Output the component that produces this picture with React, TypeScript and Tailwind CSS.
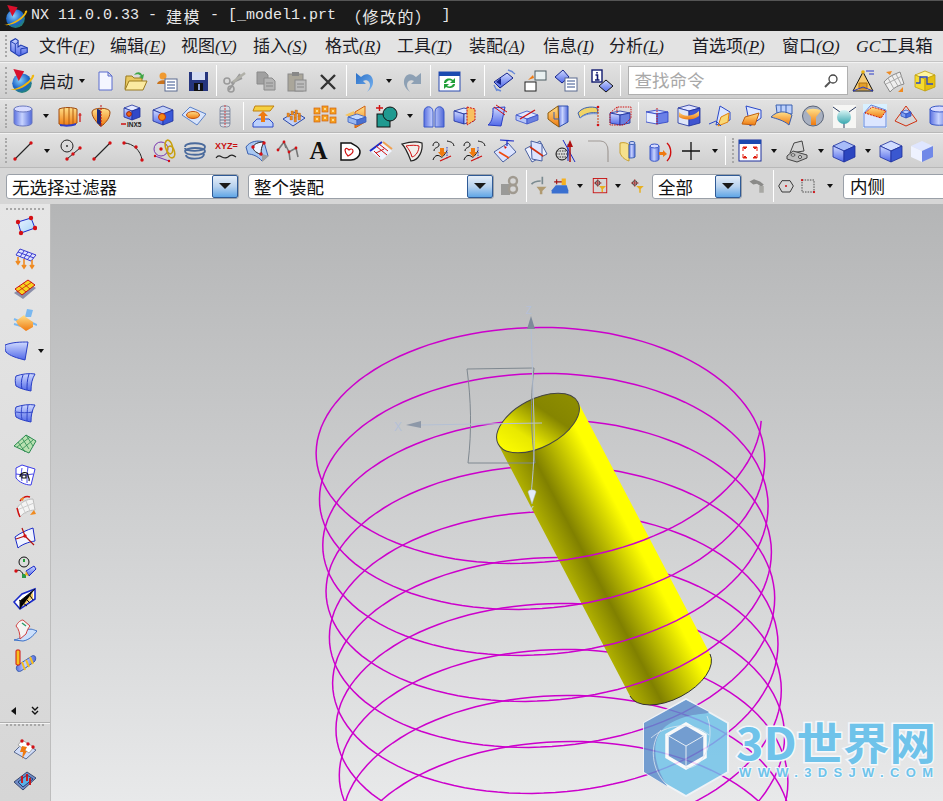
import type { ReactNode } from 'react'

const cjk = "font-['Noto_Sans_CJK_SC',sans-serif]"

function Iso({ cx = 12, y = 3, w = 9, d = 4, h = 11, t = '#e3e8ff', l = 'url(#gB)', r = '#3048c8', s = '#1c2f9c' }) {
  return (
    <g stroke={s} strokeWidth="0.8" strokeLinejoin="round">
      <path d={`M${cx} ${y}L${cx + w} ${y + d}L${cx} ${y + 2 * d}L${cx - w} ${y + d}Z`} fill={t} />
      <path d={`M${cx - w} ${y + d}L${cx} ${y + 2 * d}V${y + 2 * d + h}L${cx - w} ${y + d + h}Z`} fill={l} />
      <path d={`M${cx + w} ${y + d}L${cx} ${y + 2 * d}V${y + 2 * d + h}L${cx + w} ${y + d + h}Z`} fill={r} />
    </g>
  )
}

const Dot = ({ x, y, r = 1.7 }: { x: number; y: number; r?: number }) => <circle cx={x} cy={y} r={r} fill="#d40f14" />

const Sheet = ({ fill = 'url(#gB)', stroke = '#2a3fc4' }) => (
  <path d="M3 6C9 4 16 3 22 4C19 9 18 14 18 21C13 20 8 19 3 16C2 12 2 9 3 6Z" fill={fill} stroke={stroke} />
)

const Grid = ({ stroke = '#2a3fc4' }) => (
  <path d="M9 5C8 10 8 15 9 18M15 4C14 10 14 15 14 20M3 11C9 12 14 12 20 11" fill="none" stroke={stroke} strokeWidth="0.9" />
)

const Wave = () => <path d="M2 19C6 13 9 22 14 18C17 15 19 16 22 18" fill="none" stroke="#222" strokeWidth="1.1" />

const icons: Record<string, ReactNode> = {
  logo: (
    <>
      <circle cx="12" cy="14" r="9" fill="url(#gGlobe)" />
      <path d="M1 20C8 22 20 15 23 8C24 6 22 6 21 7C22 10 10 20 1 20Z" fill="#f2b70c" />
      <path d="M4 1L14 3L9 12Z" fill="#d8102c" />
    </>
  ),
  page: <path d="M6 3H15L19 7V21H6Z M15 3V7H19" fill="#f4f6ff" stroke="#5b6ccf" />,
  open: (
    <>
      <path d="M1 20L2 7H8L10 9H18V20Z" fill="#e8c860" stroke="#9a7a20" />
      <path d="M1 21L5 12H23L19 21Z" fill="#fbeaa0" stroke="#9a7a20" />
      <path d="M10 6C13 2 17 3 18 6L20 5L19 10L15 8L17 7C15 5 13 5 10 6Z" fill="#3ea545" />
    </>
  ),
  user: (
    <>
      <circle cx="8" cy="7" r="3.5" fill="#f09a30" />
      <path d="M2 15C3 10 13 10 13 15Z" fill="#c9731c" />
      <rect x="10" y="10" width="12" height="12" fill="#fff" stroke="#5a6a90" />
      <path d="M12 13H20M12 16H20M12 19H20" stroke="#34508c" />
    </>
  ),
  save: (
    <>
      <path d="M3 3H22V22H3Z" fill="#25357e" />
      <rect x="6" y="3" width="13" height="8" fill="#d4dcf2" />
      <rect x="8" y="14" width="9" height="8" fill="#111" />
      <rect x="12" y="15" width="2" height="6" fill="#8fa2d4" />
    </>
  ),
  cut: (
    <>
      <path d="M6 21L17 5M19 9L8 14" stroke="#9a9a9a" strokeWidth="2" />
      <path d="M10 13L22 4" stroke="#b0b0a8" strokeWidth="2.5" />
      <circle cx="4" cy="12" r="3" fill="none" stroke="#9a9a9a" strokeWidth="1.6" />
      <circle cx="8" cy="20" r="3" fill="none" stroke="#9a9a9a" strokeWidth="1.6" />
    </>
  ),
  copy: (
    <>
      <path d="M3 3H11L14 6V15H3Z" fill="#a0a0a0" stroke="#8a8a8a" />
      <path d="M10 9H18L21 12V21H10Z" fill="#b4b4b4" stroke="#8a8a8a" />
      <path d="M12 14H19M12 17H19" stroke="#888" />
    </>
  ),
  paste: (
    <>
      <rect x="3" y="5" width="15" height="17" fill="#aaa69a" stroke="#8a8a8a" />
      <rect x="7" y="3" width="7" height="4" fill="#888" />
      <rect x="10" y="11" width="11" height="11" fill="#bdbdbd" stroke="#8a8a8a" />
      <path d="M12 15H19M12 18H19" stroke="#888" />
    </>
  ),
  del: <path d="M5 6L19 20M19 6L5 20" stroke="#333" strokeWidth="2.4" />,
  undo: <path d="M3 4V15H13L10 12C13 10 17 12 17 16C17 18 16 21 14 23C20 19 22 12 18 7C15 4 11 5 8 8L3 4Z" fill="url(#gU)" />,
  redo: <path d="M21 4V15H11L14 12C11 10 7 12 7 16C7 18 8 21 10 23C4 19 2 12 6 7C9 4 13 5 16 8L21 4Z" fill="#8da0b4" />,
  refresh: (
    <>
      <rect x="2" y="3" width="21" height="19" fill="#fff" stroke="#2a4ab0" />
      <rect x="2" y="3" width="21" height="4" fill="#1a4ab0" />
      <path d="M7 14C7 10 12 8 16 11L18 9V14H13L15 12C12 10 10 12 9 14ZM18 15C18 19 12 20 9 18L7 20V15H12L10 17C13 18 15 17 16 15Z" fill="#22a03a" />
    </>
  ),
  orient: (
    <>
      <path d="M2 13L15 4L21 9L8 19Z" fill="url(#gB)" stroke="#15248c" />
      <path d="M5 22L2 16M21 3L16 1M23 5L19 2M9 22L4 20" stroke="#6a8ad8" strokeWidth="1.4" />
      <path d="M4 13L9 9V16Z" fill="#15248c" />
    </>
  ),
  windows: (
    <>
      <rect x="2" y="13" width="11" height="9" fill="#fff" stroke="#222" />
      <rect x="12" y="2" width="11" height="9" fill="#e8f0f0" stroke="#4a5a60" />
      <path d="M5 11L10 6L11 9L8 10Z" fill="#ef7a10" />
    </>
  ),
  difflist: (
    <>
      <path d="M1 8L9 1L15 8L8 14Z" fill="url(#gB)" stroke="#15248c" />
      <rect x="11" y="9" width="12" height="13" fill="#fff" stroke="#5a6a90" />
      <path d="M13 12H21M13 15H21M13 18H21" stroke="#34508c" />
    </>
  ),
  info: (
    <>
      <rect x="2" y="1" width="10" height="12" fill="#fff" stroke="#111a70" strokeWidth="1.4" />
      <path d="M7 3V4.6M5.5 6H7.5V11M5 11H9.5" stroke="#111a70" strokeWidth="1.6" fill="none" />
      <path d="M9 17L16 11L23 17L16 23Z" fill="url(#gB)" stroke="#111" />
    </>
  ),
  pyramid: (
    <>
      <path d="M12 3L2 22H22Z" fill="#f5c970" stroke="#111" />
      <path d="M8 14H16V20H8Z" fill="#e3a02a" stroke="#b07010" />
      <path d="M2 22L12 18L22 22" fill="none" stroke="#2a3ac8" />
      <circle cx="12" cy="3" r="1.8" fill="#e8b010" />
      <path d="M15 2H23M18 5H23" stroke="#2a3ac8" />
    </>
  ),
  mesh: (
    <>
      <path d="M2 13C7 7 13 5 18 3L22 15C17 16 11 19 8 23Z" fill="#eee" stroke="#888" />
      <path d="M6 9L12 20M10 7L16 17M14 5L19 15M4 15L20 7" stroke="#aaa" />
      <path d="M4 3L10 2L8 6ZM16 23L21 18L21 23Z" fill="#ef8a20" />
    </>
  ),
  yellowcube: (
    <>
      <Iso cx={12} y={2} w={10} d={4} h={12} t="#fff6a0" l="#f5dc30" r="#e5c010" s="#c0a010" />
      <path d="M3 14H7V8H14V15H20" fill="none" stroke="#2a48c8" strokeWidth="1.3" />
    </>
  ),
  cyl: (
    <>
      <path d="M3 5V19C3 23 21 23 21 19V5Z" fill="url(#gBh)" stroke="#6a78c0" />
      <ellipse cx="12" cy="5" rx="9" ry="3" fill="#d8dcff" stroke="#6a78c0" />
    </>
  ),
  extrude: (
    <>
      <path d="M1 5C6 3 14 3 19 5V19C14 22 6 22 1 20Z" fill="url(#gO)" stroke="#a04a10" />
      <path d="M6 4V21M11 4V21M15 4V21" stroke="#b05a10" />
      <path d="M2 20C6 21 14 21 18 19V21C14 23 6 23 2 22Z" fill="#3040c8" />
      <path d="M22 9V18M20.5 11H23.5" stroke="#d01010" strokeWidth="1.2" />
    </>
  ),
  revolve: (
    <>
      <path d="M3 8C3 3 21 3 21 8C21 14 17 18 14 21L11 22C8 18 3 14 3 8Z" fill="url(#gO)" stroke="#a04a10" />
      <path d="M8 5V19L12 22V8C12 6 10 5 8 5Z" fill="#1c2a80" />
      <path d="M12 1V23" stroke="#c01010" strokeDasharray="2 1" />
    </>
  ),
  hole: (
    <>
      <Iso cx={12} y={1} w={8} d={3} h={9} />
      <circle cx="9" cy="10" r="2.4" fill="#ef6a10" stroke="#a02010" />
      <path d="M1 20H6" stroke="#d01010" strokeWidth="1.5" />
      <text x="7" y="23" fontSize="6.5" fontWeight="700" fontFamily="Liberation Sans" fill="#222">INX5</text>
    </>
  ),
  boss: (
    <>
      <Iso cx={12} y={2} w={10} d={4} h={11} t="#c5d2f8" l="url(#gB)" r="#3a58d8" />
      <circle cx="11" cy="13" r="3.5" fill="#f58a10" stroke="#c03010" />
    </>
  ),
  pad: (
    <>
      <path d="M0 11L8 3L24 10L15 21Z" fill="#d8e4fa" stroke="#5a80c8" />
      <ellipse cx="11" cy="11" rx="6.500" ry="3.500" fill="url(#gO)" stroke="#c05010" />
    </>
  ),
  thread: (
    <>
      <rect x="7" y="2" width="10" height="21" rx="3" fill="#d8dce4" stroke="#8a93a8" />
      <path d="M7 7H17M7 10H17M7 13H17M7 16H17M7 19H17" stroke="#70788c" />
      <path d="M12 1V23" stroke="#d04040" strokeDasharray="2 1" />
    </>
  ),
  raise: (
    <>
      <path d="M4 2H23L19 7H2Z" fill="#f5d040" stroke="#c08010" />
      <path d="M2 19L6 15H18L22 19V23H2Z" fill="#bcd0fb" stroke="#2a48c8" />
      <path d="M10 18V12H7L12 7L17 12H14V18Z" fill="#ef7a10" />
    </>
  ),
  bumps: (
    <>
      <path d="M1 15L13 8L23 14L11 22Z" fill="#c5d3f8" stroke="#2a48a8" />
      {[[6, 12], [10, 10], [14, 9], [9, 15], [13, 13], [17, 12], [13, 17], [17, 15]].map(([x, y]) => (
        <rect key={`${x}-${y}`} x={x - 1} y={y - 3} width="2.500" height="4" fill="#e98a20" stroke="#b05a10" strokeWidth="0.3" />
      ))}
    </>
  ),
  cubes: (
    <>
      {[[4, 7], [12, 5], [20, 7], [4, 15], [12, 14], [20, 16]].map(([x, y]) => (
        <g key={`${x}-${y}`}>
          <rect x={x - 3} y={y - 3} width="6" height="6" fill="#f5a020" stroke="#d06010" strokeWidth="0.7" />
          <rect x={x - 1} y={y - 1} width="2" height="2" fill="#ffd890" />
        </g>
      ))}
    </>
  ),
  plane: (
    <>
      <path d="M11 8L21 2V18L11 24Z" fill="url(#gO)" stroke="#d06010" />
      <path d="M1 11L10 7V15Z" fill="#f5c460" />
      <Iso cx={13} y={10} w={9} d={3} h={5} t="#c0d8ff" l="#9ab8f0" r="#4a70d0" s="#3a60c0" />
    </>
  ),
  csg: (
    <>
      <rect x="2" y="10" width="13" height="13" fill="#1f9a90" stroke="#111" />
      <circle cx="15" cy="10" r="7" fill="#1f9a90" stroke="#111" />
      <path d="M1 4H8M4.500 1V7" stroke="#d01010" strokeWidth="1.4" />
    </>
  ),
  twin: (
    <>
      <path d="M2 23V8C2 1 11 1 11 8V23ZM13 23V8C13 1 22 1 22 8V23Z" fill="url(#gBh)" stroke="#3a58c8" />
    </>
  ),
  redbox: (
    <>
      <Iso cx={11} y={4} w={10} d={3} h={10} t="#dfe6ff" l="url(#gB)" r="#bcd0fb" />
      <path d="M14 3L22 5V16L14 21Z" fill="#f8c060" stroke="#d01010" strokeDasharray="2 1" />
    </>
  ),
  sweep: (
    <>
      <path d="M9 4L21 3L17 22L4 21C9 17 9 10 9 4Z" fill="url(#gB)" stroke="#2a3fc4" />
      <path d="M12 1L23 8M10 3L21 11" stroke="#d01010" />
    </>
  ),
  slab: (
    <>
      <Iso cx={12} y={7} w={11} d={4} h={5} t="#e0e8ff" l="#b8c8f8" r="#6a80e0" s="#3a50c8" />
      <path d="M5 15L20 6" stroke="#d01010" strokeWidth="1.4" />
    </>
  ),
  chamfer: (
    <>
      <path d="M12 2H22V18L13 23Z" fill="url(#gBh)" stroke="#3050b0" />
      <path d="M2 9L12 2L13 23L7 19L2 15Z" fill="url(#gO)" stroke="#8a5a10" />
      <path d="M8 8V15H13" stroke="#3a60b0" fill="none" />
    </>
  ),
  band: (
    <>
      <path d="M1 9C5 3 15 2 20 4L21 9C15 8 8 9 3 14Z" fill="#f0d468" stroke="#3a60b0" />
      <path d="M3 14C8 10 15 9 21 10" stroke="#6a90d8" fill="none" />
      <path d="M21 2V21" stroke="#d04010" strokeDasharray="2 1" />
      <Dot x={21} y={3} r={1.3} />
      <Dot x={21} y={21} r={1.3} />
    </>
  ),
  redcage: (
    <>
      <Iso cx={12} y={7} w={10} d={2} h={10} t="#dfe6ff" l="url(#gB)" r="#6a80e0" />
      <path d="M2 9L9 3H23V14L16 21H2Z M9 3V9" fill="none" stroke="#d01010" strokeDasharray="1.5 1" />
    </>
  ),
  cutbox: (
    <>
      <Iso cx={11} y={6} w={11} d={2} h={10} t="#cfdcff" l="#e8efff" r="#6a80e8" s="#2a3fc4" />
      <path d="M11 4V21" stroke="#d01010" strokeDasharray="1.5 1" />
    </>
  ),
  topband: (
    <>
      <Iso cx={12} y={1} w={11} d={3} h={15} t="#e0e4ff" l="#dfe6f8" r="#4055d0" s="#1c2f9c" />
      <path d="M2 8C6 13 16 13 22 7V12C16 17 6 16 2 13Z" fill="url(#gO)" />
    </>
  ),
  fold: (
    <>
      <path d="M12 2L22 8V16L8 21Z" fill="#dce6ff" stroke="#2a48c8" />
      <path d="M10 22L20 18L21 9L13 13Z" fill="#f8d878" stroke="#e08010" />
      <path d="M1 20L8 17L13 22" fill="none" stroke="#2a48c8" />
    </>
  ),
  fold2: (
    <>
      <path d="M7 2L22 6V14L11 22Z" fill="#dce6ff" stroke="#2a48c8" />
      <path d="M6 13L20 9L16 21L3 20Z" fill="url(#gO)" stroke="#c06010" />
    </>
  ),
  fold3: (
    <>
      <path d="M6 1H22V10L7 9Z" fill="#bcd0fb" stroke="#3a60b0" />
      <path d="M11 1V9M16 1V9" stroke="#3a60b0" />
      <path d="M1 13C8 6 16 7 22 11L19 21C13 16 7 15 1 13Z" fill="url(#gO)" stroke="#3a60b0" />
    </>
  ),
  funnel: (
    <>
      <ellipse cx="12" cy="12" rx="10.500" ry="10" fill="#a8b0c0" stroke="#5a6478" />
      <path d="M5 7C7 4 17 4 20 7L15 13V21H10V13Z" fill="url(#gO)" />
    </>
  ),
  node: (
    <>
      <rect x="1" y="1" width="23" height="23" fill="#f6f6f4" />
      <path d="M1 3L8 8M24 3L17 8M12 24V19" stroke="#2a3a60" />
      <circle cx="12" cy="13" r="7" fill="url(#gTeal)" />
    </>
  ),
  slope: (
    <>
      <path d="M0 0H24V24H0Z" fill="#d8f0ff" />
      <path d="M1 9L8 1L23 6V23H1Z" fill="#dce6ff" stroke="#6a88d8" />
      <path d="M2 9L9 3L23 7L18 14Z" fill="url(#gO)" stroke="#d02010" strokeDasharray="2 1" />
    </>
  ),
  frustum: (
    <>
      <path d="M12 2L23 17L12 22L1 17Z" fill="none" stroke="#d03010" />
      <Iso cx={12} y={6} w={5} d={2} h={4} t="#c0d0ff" l="#80a0f0" r="#4a70e0" s="#3050c0" />
    </>
  ),
  cylb: (
    <>
      <path d="M5 5V19C5 22 24 22 24 19V5Z" fill="url(#gBh)" stroke="#3a58c8" />
      <ellipse cx="14.500" cy="5" rx="9.500" ry="3" fill="#d8dcff" stroke="#3a58c8" />
    </>
  ),
  line: (
    <>
      <path d="M4 20L20 4" stroke="#222" strokeWidth="1.1" />
      <Dot x={4} y={20} />
      <Dot x={20} y={4} />
    </>
  ),
  circline: (
    <>
      <circle cx="8" cy="7" r="6" fill="none" stroke="#222" />
      <circle cx="8" cy="7" r="0.9" fill="#222" />
      <path d="M8 20L21 9" stroke="#222" />
      <Dot x={8} y={20} />
      <Dot x={14} y={15} />
      <Dot x={21} y={9} />
    </>
  ),
  arc: (
    <>
      <path d="M3 4C12 4 20 12 21 21" fill="none" stroke="#222" />
      <Dot x={3} y={4} />
      <Dot x={15} y={8} />
      <Dot x={21} y={21} />
    </>
  ),
  chain: (
    <>
      <circle cx="9" cy="10" r="7" fill="none" stroke="#7a38b0" />
      <Dot x={9} y={10} />
      <ellipse cx="17" cy="8" rx="3.500" ry="7" fill="none" stroke="#c8a010" strokeWidth="1.6" transform="rotate(-15 17 8)" />
      <ellipse cx="19" cy="13" rx="3.500" ry="6" fill="none" stroke="#c8a010" strokeWidth="1.6" transform="rotate(-15 19 13)" />
      <path d="M3 17L17 22" stroke="#7a38b0" />
      <Dot x={3} y={17} r={1.2} />
      <Dot x={17} y={22} r={1.2} />
    </>
  ),
  spring: <path d="M2 8C2 3 22 3 22 8C22 13 2 13 2 9M2 12C2 17 22 17 22 12C22 8 2 8 2 12M3 16C3 21 21 21 21 15" fill="none" stroke="#4a6a9c" strokeWidth="1.8" />,
  xyz: (
    <>
      <text x="1" y="10" fontSize="9" fontWeight="700" fontFamily="Liberation Sans" fill="#c81010">XYZ=</text>
      <Wave />
    </>
  ),
  surf: (
    <>
      <path d="M1 8C5 2 13 1 19 3L23 17L17 22C13 17 7 15 3 15Z" fill="#a9c8f2" stroke="#3a60b0" />
      <path d="M8 8C9 5 13 3 19 3C17 7 15 12 17 16C12 14 8 12 8 8Z" fill="#f0f4ff" stroke="#222" />
      <path d="M17 15L24 17L17 23Z" fill="#a0a0a0" />
      <Dot x={8} y={8} />
      <Dot x={19} y={4} />
      <Dot x={16} y={15} />
    </>
  ),
  poly: (
    <>
      <path d="M2 11L8 3L13 13L20 9L22 18M8 3L10 9M13 13L14 21" stroke="#777" strokeWidth="1.6" fill="none" />
      <Dot x={8} y={3} r={1.4} />
      <Dot x={13} y={13} r={1.4} />
      <Dot x={2} y={11} r={1.4} />
      <Dot x={20} y={9} r={1.4} />
    </>
  ),
  heart: (
    <>
      <path d="M3 4H13C15 6 22 7 22 13C22 18 17 21 13 21H3Z" fill="#fff" stroke="#111" strokeWidth="1.5" />
      <path d="M7 11C8 8 10 10 11 11C12 10 15 9 15 12C15 14 12 16 10 17C8 15 7 13 7 11Z" fill="none" stroke="#d01010" strokeWidth="1.2" />
    </>
  ),
  patch: (
    <>
      <path d="M1 12L13 3L23 12L13 21Z" fill="#eef4ff" />
      <path d="M1 12L13 3" stroke="#1a2ac8" strokeWidth="2" />
      <path d="M7 7L18 16M5 12L11 18M10 5L19 12M7 14L15 10" stroke="#d01010" />
      <path d="M14 3L23 10" stroke="#f0a050" strokeWidth="2" />
    </>
  ),
  dshape: (
    <>
      <path d="M2 5C9 3 17 2 22 4C23 12 19 21 11 22C9 17 6 9 2 5Z" fill="#f2eeea" stroke="#222" strokeWidth="1.2" />
      <path d="M6 7C11 6 16 6 19 7C19 12 16 17 12 18C11 14 9 10 6 7Z" fill="none" stroke="#d01010" />
    </>
  ),
  curves: (
    <>
      <path d="M2 7C2 2 8 2 8 6C8 9 3 8 3 12M16 2C20 3 22 3 23 7M2 21C4 15 8 16 10 18C12 19 14 14 16 12" fill="none" stroke="#111" />
      <path d="M16 8V20" stroke="#2a3ac8" strokeDasharray="1.5 1" />
      <path d="M9 9V13H7L11 18L15 13H13V9Z" fill="#ef7a10" />
      <path d="M9 22L20 17" stroke="#d01010" strokeWidth="1.3" />
    </>
  ),
  diamond: (
    <>
      <path d="M1 13L15 4L23 13L10 23Z" fill="#dce4ff" stroke="#4a60a0" />
      <path d="M7 1L21 2M14 2V7" stroke="#1a2ac8" strokeWidth="1.2" />
      <path d="M11 7L14 8L12 10Z" fill="#d01010" />
      <path d="M6 13L16 19" stroke="#ef4a10" strokeWidth="1.6" />
    </>
  ),
  diamond2: (
    <>
      <path d="M1 10L16 2L23 15L8 23Z" fill="#eef2ff" stroke="#4a60a0" />
      <path d="M7 2L18 5V22L8 20Z" fill="#dce4ff" stroke="#4a60a0" />
      <path d="M6 8L19 17" stroke="#d03010" strokeWidth="1.6" />
    </>
  ),
  sectn: (
    <>
      <circle cx="7" cy="15" r="6" fill="none" stroke="#111" />
      <path d="M1 15H13M2 12H12M2 18H12" stroke="#333" strokeDasharray="1.5 1" />
      <path d="M8 1L20 23" stroke="#1a2ac8" />
      <path d="M13 5L13 22" stroke="#1a2ac8" />
      <path d="M15 23V6" stroke="#b01010" strokeWidth="1.5" />
      <path d="M12 8L15 1L18 8Z" fill="#b01010" />
    </>
  ),
  fillet: <path d="M2 2H14C19 2 22 6 22 12V23" fill="none" stroke="#a09a96" strokeWidth="1.2" />,
  tube: (
    <>
      <path d="M3 4C7 3 11 4 12 6V22C9 21 5 19 3 14Z" fill="#f5e08c" stroke="#c8a030" />
      <path d="M12 6V19C14 19 17 19 18 18V5C16 4 13 4 12 6Z" fill="url(#gBh)" stroke="#3a60b0" />
      <ellipse cx="15" cy="4" rx="3" ry="1.500" fill="#d8dcff" stroke="#3a60b0" />
    </>
  ),
  cylarrow: (
    <>
      <path d="M2 7V20C2 23 11 23 11 20V7Z" fill="url(#gBh)" stroke="#3a58c8" />
      <ellipse cx="6.500" cy="7" rx="4.500" ry="2" fill="#d8dcff" stroke="#3a58c8" />
      <path d="M11 13H15V11L19 15L15 18V16H11Z" fill="#ef7a10" />
      <path d="M19 4C24 9 24 17 19 22" fill="none" stroke="#d01010" strokeWidth="1.4" />
    </>
  ),
  plus: <path d="M12 3V21M3 12H21" stroke="#111" strokeWidth="1.3" />,
  fit: (
    <>
      <rect x="1" y="1" width="22" height="21" fill="#fff" stroke="#1c2f9c" />
      <rect x="1" y="1" width="22" height="4" fill="#1a4ab0" />
      <path d="M5 8H9L7 10ZM19 8H15L17 10ZM5 19H9L7 17ZM19 19H15L17 17ZM5 8V12M19 8V12M5 19V15M19 19V15" stroke="#e02010" fill="#e02010" />
    </>
  ),
  camera: (
    <>
      <path d="M5 14L9 4L17 2L19 12Z" fill="#d4d4d4" stroke="#444" />
      <path d="M2 17L8 12L22 16V19L12 23L2 20Z" fill="#bdbdbd" stroke="#444" />
      <ellipse cx="8" cy="16" rx="2" ry="1.200" fill="#fff" stroke="#444" />
      <circle cx="15" cy="18" r="1.500" fill="#fff" stroke="#444" />
    </>
  ),
  cube: <Iso cx={12} y={2} w={11} d={5} h={11} t="#a8bcf8" l="url(#gB)" r="#2c46c0" />,
  cube2: <Iso cx={12} y={2} w={11} d={5} h={11} t="#d0dcff" l="url(#gB)" r="#3a58d0" />,
  cube3: <Iso cx={12} y={2} w={11} d={5} h={11} t="#dfe6ff" l="#eef2ff" r="#7088e8" s="transparent" />,
  bw1: (
    <>
      <path d="M3 10C6 6 11 6 14 6M16 1V10" stroke="#7a8a90" strokeWidth="2" fill="none" />
      <path d="M9 13H21L16 18V22H13V18Z" fill="#b09a70" />
    </>
  ),
  bw2: (
    <>
      <path d="M5 7H11M8 4V10M11 7H17" stroke="#a01010" strokeWidth="1.3" />
      <rect x="14" y="3" width="5" height="8" fill="#f5b020" />
      <path d="M2 17L7 11H20L22 17V21H2Z" fill="#3a70d0" />
    </>
  ),
  bw3: (
    <>
      <rect x="3" y="2" width="18" height="19" fill="none" stroke="#c81010" strokeWidth="1.2" />
      <circle cx="9" cy="8" r="3" fill="none" stroke="#111" />
      <path d="M4 8H14M9 3V13" stroke="#a01010" />
      <path d="M11 12H20L16 16V20H14V16Z" fill="#e8b020" />
    </>
  ),
  bw4: (
    <>
      <circle cx="9" cy="8" r="3" fill="none" stroke="#111" />
      <path d="M4 8H14M9 3V13" stroke="#a01010" />
      <path d="M11 12H21L17 16V21H15V16Z" fill="#e8b020" />
    </>
  ),
  chains: (
    <>
      <path d="M3 10H12V21H3Z" fill="#9a9a98" />
      <circle cx="15" cy="7" r="4" fill="none" stroke="#a09a90" strokeWidth="2.4" />
      <circle cx="15" cy="15" r="4" fill="none" stroke="#a09a90" strokeWidth="2.4" />
    </>
  ),
  grey: (
    <>
      <path d="M2 6L8 3L16 6L21 10L18 13L12 9L7 10Z" fill="#8a8a88" />
      <rect x="15" y="12" width="6" height="9" fill="#a8a8a4" />
    </>
  ),
  hex: (
    <>
      <path d="M6 4H18L23 12L18 21H6L1 12Z" fill="none" stroke="#222" strokeWidth="1.3" />
      <Dot x={12} y={12} r={1.500} />
    </>
  ),
  dash: (
    <>
      <rect x="4" y="4" width="16" height="16" fill="none" stroke="#222" strokeDasharray="2 1.500" />
      <Dot x={4} y={4} r={1.500} />
      <Dot x={20} y={20} r={1.500} />
    </>
  ),
  rect4: (
    <>
      <path d="M5 7L18 3L22 13L8 18Z" fill="url(#gSky)" stroke="#1a2ac8" />
      <Dot x={5} y={7} r={2.200} />
      <Dot x={18} y={3} r={2.200} />
      <Dot x={22} y={13} r={2.200} />
      <Dot x={8} y={18} r={2.200} />
    </>
  ),
  netdown: (
    <>
      <path d="M7 3L23 9L18 15L3 9Z" fill="#dfe4ff" stroke="#3a3ad0" />
      <path d="M11 5L7 11M15 6L11 12M19 8L14 14M5 6L21 12" stroke="#3a3ad0" />
      <path d="M5 11V17M3 15L5 18L7 15M11 13V21M9 19L11 22L13 19M19 14V21M17 19L19 22L21 19" stroke="#ef8a20" strokeWidth="1.6" fill="none" />
    </>
  ),
  netyel: (
    <>
      <path d="M1 16L15 6L23 11L10 22Z" fill="#8a8ea8" />
      <path d="M2 12L15 3L22 8L9 18Z" fill="#f5d420" stroke="#d01010" />
      <path d="M6 9L13 15M10 6L17 12M4 15L19 5" stroke="#d01010" strokeWidth="0.8" />
    </>
  ),
  ytee: (
    <>
      <path d="M14 1L20 2L18 9L12 9Z" fill="#7ab8f0" />
      <path d="M1 11L8 14M1 16L8 18M17 14L24 17" stroke="#7ab8f0" strokeWidth="2" />
      <path d="M3 13L11 7L14 10L20 14V19L13 23L5 17Z" fill="url(#gO)" />
    </>
  ),
  patch1: <path d="M0 6C8 3 16 3 23 3L20 21C12 19 5 17 1 13C0 11 0 8 0 6Z" fill="url(#gB)" stroke="#2a3fc4" />,
  patch3: (
    <>
      <Sheet />
      <path d="M10 5C8 10 8 15 9 19M16 4C14 10 14 15 14 20" fill="none" stroke="#2a3fc4" />
    </>
  ),
  patch6: (
    <>
      <Sheet />
      <Grid />
    </>
  ),
  patchg: (
    <>
      <path d="M1 14L13 3L23 9L16 21Z" fill="#b8e0b0" stroke="#2a8a50" />
      <path d="M5 10L12 20M9 6L16 17M13 3L20 14M4 15L17 5M8 18L20 8" stroke="#2a8a50" strokeWidth="0.8" />
    </>
  ),
  patchb: (
    <>
      <path d="M3 5L9 2L22 6L18 22C12 22 6 19 3 15Z" fill="#fff" stroke="#3a3ae8" />
      <Grid stroke="#3a3ae8" />
      <path d="M7 14C7 9 15 8 15 12C15 15 17 15 16 18M9 15V12H13V15Z" fill="none" stroke="#111" strokeWidth="1.2" />
    </>
  ),
  patchr: (
    <>
      <path d="M4 14C8 8 14 5 20 5L22 16C16 16 10 19 7 23Z" fill="#f4f4f4" stroke="#bbb" />
      <path d="M8 10L13 20M13 7L17 17M4 16L21 9" stroke="#ccc" />
      <path d="M4 14C5 18 6 21 7 23" stroke="#d01010" strokeWidth="1.5" fill="none" />
      <path d="M7 7C10 3 14 2 17 3" stroke="#d01010" strokeWidth="1.5" fill="none" />
      <path d="M17 21L21 16L23 20Z" fill="#ef8a20" />
      <path d="M7 5L11 3L10 7Z" fill="#ef8a20" />
    </>
  ),
  axes: (
    <>
      <path d="M2 12C7 8 14 5 20 3L22 16C15 17 8 20 5 23Z" fill="#f0f4ff" stroke="#1a2ac8" />
      <path d="M12 11L9 3M12 11L3 14M12 11L21 20" stroke="#b01010" strokeWidth="1.2" />
      <Dot x={12} y={11} />
    </>
  ),
  curvetool: (
    <>
      <circle cx="11" cy="6" r="5" fill="none" stroke="#111" />
      <path d="M11 3V6" stroke="#22a03a" strokeWidth="2" />
      <path d="M3 15C6 13 9 15 11 20" fill="none" stroke="#111" />
      <Dot x={3} y={15} />
      <rect x="9" y="18" width="4" height="4" fill="#2a9a4a" />
      <path d="M13 15L21 10L23 13L16 20Z" fill="url(#gB)" stroke="#1a2ac8" />
      <path d="M13 15L16 20L12 19Z" fill="#f0b020" />
    </>
  ),
  roof: (
    <>
      <path d="M1 15L9 7L22 2V12L7 22Z" fill="#fff" stroke="#1a2ac8" strokeWidth="1.6" />
      <path d="M9 12L20 6V11L10 19Z" fill="#f5c040" opacity="0.8" />
      <path d="M7 22V14L22 2M6 13L14 19M11 10L17 16M16 7L20 13" stroke="#111" />
    </>
  ),
  blend: (
    <>
      <path d="M1 22C8 21 12 16 14 12C18 10 21 12 24 13C20 18 16 22 10 23Z" fill="#cce0fb" stroke="#3a70c8" />
      <path d="M3 8C5 4 8 2 10 2L17 8C15 10 14 13 13 16L7 21C7 16 6 11 3 8Z" fill="#f4f4f4" stroke="#d04040" />
      <path d="M9 5L13 8" stroke="#2a9a6a" strokeWidth="1.4" />
    </>
  ),
  pipe: (
    <>
      <path d="M5 16L19 7C23 5 24 11 21 13L8 22C3 24 2 18 5 16Z" fill="url(#gBh)" stroke="#3a60b0" />
      <path d="M9 13L12 21M13 11L16 18M17 8L20 15" stroke="#f5c020" strokeWidth="2" />
      <rect x="3" y="1" width="4" height="15" rx="1" fill="#f5c020" stroke="#d01010" />
    </>
  ),
  pins: (
    <>
      <path d="M1 15L10 6L23 13L13 22Z" fill="#d0dcf8" stroke="#5a6a90" />
      <path d="M5 8L9 3L21 10L16 16Z" fill="#fff" stroke="#aaa" />
      <path d="M9 9L14 10L12 14H14L9 22L10 15H7Z" fill="#ef7a10" />
      <Dot x={9} y={4} />
      <Dot x={15} y={7} />
      <Dot x={20} y={10} />
    </>
  ),
  pocket: (
    <>
      <path d="M1 14L14 4L23 10L10 22Z" fill="#708cc8" stroke="#3a4a70" />
      <path d="M5 14L14 7L20 11L10 19Z" fill="#5ab0e8" stroke="#2a3a70" />
      <path d="M9 8V15M14 6V13M17 10V17" stroke="#d01010" strokeWidth="1.8" />
    </>
  ),
  yellowflag: <path d="M3 12L14 4L22 10L13 20Z" fill="#f5d870" stroke="#b09020" />,
}

function Ic({ n, className = 'h-[24px] w-[24px]' }: { n: string; className?: string }) {
  return (
    <svg viewBox="0 0 24 24" className={`${className} shrink-0`}>
      {icons[n]}
    </svg>
  )
}

const Slot = ({ n }: { n: string }) => (
  <div className="flex h-full w-[31px] shrink-0 items-center justify-center">
    <Ic n={n} />
  </div>
)

const Tri = ({ className = 'w-[16px]' }: { className?: string }) => (
  <div className={`flex h-full shrink-0 items-center justify-center ${className}`}>
    <div className="h-0 w-0 border-x-[3.5px] border-t-[4px] border-x-transparent border-t-[#111]" />
  </div>
)

const Sep = ({ className = 'w-[5px]' }: { className?: string }) => (
  <div className={`flex h-full shrink-0 items-stretch justify-center py-[2px] ${className}`}>
    <div className="w-[1px] border-r border-r-white bg-[#b4b4b4]" />
  </div>
)

const Grip = () => (
  <div className="flex h-full w-[7.5px] shrink-0 justify-end py-[4px] pr-[1px]">
    <div className="h-full border-l-2 border-dotted border-[#a8a8a8]" />
  </div>
)

function Toolbar({ h, children }: { h: string; children: ReactNode }) {
  return (
    <div className={`flex shrink-0 items-center overflow-hidden border-b border-b-[#b8b8b8] border-t border-t-[#f2f2f2] bg-gradient-to-b from-[#e2e2e2] to-[#cfcfcf] ${h}`}>
      {children}
    </div>
  )
}

function Drop({ label, className }: { label: string; className: string }) {
  return (
    <div className={`flex h-[25px] shrink-0 items-stretch rounded-[3px] border border-[#9aa0a8] bg-white ${className}`}>
      <span className={`flex-1 pl-[5px] text-[17.5px] leading-[23px] text-[#111] ${cjk}`}>{label}</span>
      <div className="flex w-[26px] items-center justify-center rounded-[2px] border border-[#2f5a96] bg-gradient-to-b from-[#e6eef8] via-[#b8d2ee] to-[#5fa6e6]">
        <div className="h-0 w-0 border-x-[6px] border-t-[6px] border-x-transparent border-t-[#1a1a1a]" />
      </div>
    </div>
  )
}

const menus: [string, string, string][] = [
  ['文件', 'F', 'w-[71px]'],
  ['编辑', 'E', 'w-[71px]'],
  ['视图', 'V', 'w-[72px]'],
  ['插入', 'S', 'w-[72px]'],
  ['格式', 'R', 'w-[72px]'],
  ['工具', 'T', 'w-[72px]'],
  ['装配', 'A', 'w-[74px]'],
  ['信息', 'I', 'w-[66px]'],
  ['分析', 'L', 'w-[83px]'],
  ['首选项', 'P', 'w-[90px]'],
  ['窗口', 'O', 'w-[74px]'],
]

// helix wire, front half first; split so the back half passes behind the cylinder
function helix(from: number, to: number) {
  const pts: string[] = []
  for (let i = 0; i <= 60; i++) {
    const t = from + ((to - from) * i) / 60
    const a = t * Math.PI * 2
    const x = 537 + 3.3 * t + 223.5 * Math.cos(a)
    const y = 422 + 46 * t + 129 * Math.sin(a) - 8 * Math.cos(a)
    pts.push(`${i ? 'L' : 'M'}${x.toFixed(1)} ${y.toFixed(1)}`)
  }
  return pts.join('')
}
const turns = [0, 1, 2, 3, 4, 5, 6, 7, 8, 9]
const front = turns.map((k) => helix(k === 0 ? 0.008 : k, k + 0.5)).join('')
const back = turns.map((k) => helix(k + 0.5, k + 1)).join('')

function Canvas() {
  return (
    <svg viewBox="50 204 893 597" className="block h-[597px] w-[893px]">
      <defs>
        <linearGradient id="cylSide" gradientUnits="userSpaceOnUse" x1="497" y1="444" x2="577" y2="402">
          <stop offset="0" stopColor="#b0b000" />
          <stop offset="0.28" stopColor="#808000" />
          <stop offset="0.85" stopColor="#ffff00" />
          <stop offset="1" stopColor="#ffff00" />
        </linearGradient>
        <linearGradient id="cylIn" gradientUnits="userSpaceOnUse" x1="497" y1="444" x2="577" y2="402">
          <stop offset="0" stopColor="#ffff00" />
          <stop offset="0.3" stopColor="#e8e800" />
          <stop offset="0.65" stopColor="#858500" />
          <stop offset="1" stopColor="#8f8f00" />
        </linearGradient>
      </defs>
      <path d={back} fill="none" stroke="#cc00cc" strokeWidth="1.5" />
      <g>
        <path d="M497 444L629 696A45 24 -27.800 0 0 709 654L577 402Z" fill="url(#cylSide)" />
        <path d="M629 696A45 24 -27.800 0 0 709 654" fill="none" stroke="#333" strokeWidth="1" />
        <ellipse cx="537" cy="423" rx="45" ry="24" transform="rotate(-27.800 537 423)" fill="url(#cylIn)" stroke="#444" strokeWidth="1" />
      </g>
      <path d={front} fill="none" stroke="#cc00cc" strokeWidth="1.5" />
      <path d="M466 369L533 368C529 400 530 435 534 463L467 463C471 430 470 400 466 369Z" fill="none" stroke="#7f8890" strokeWidth="1" />
      <path d="M530 326L533 420C534 450 532 475 530 495M417 425L541 423" fill="none" stroke="#b4c0d4" strokeWidth="1" />
      <path d="M530 316L534 329H526Z" fill="#7d8a9a" />
      <path d="M405 425L420 421V428Z" fill="#8d98a8" />
      <path d="M531 504L535 492C535 489 527 489 527 492Z" fill="#e4ecf8" stroke="#a8b4c8" strokeWidth="0.5" />
      <text x="393" y="431" fontSize="12" fontFamily="Liberation Sans" fill="#b4c0d8">X</text>
      <text x="525" y="314" fontSize="10" fontFamily="Liberation Sans" fill="#b4c0d8">Z</text>
      <text x="527" y="512" fontSize="9" fontFamily="Liberation Sans" fill="#c8d4e8">Y</text>
      <g opacity="0.82">
        <path d="M685 699L727 723V772L685 796L643 772V723Z" fill="#6fc3ea" stroke="#f2f6fa" strokeWidth="2" />
        <path d="M685 700L643 723V772L666 786C650 760 650 735 668 724C688 712 706 715 708 712Z" fill="#5b8ecc" />
        <path d="M685 724L704 735V757L685 768L666 757V735Z" fill="#5b8ecc" stroke="#fff" strokeWidth="3.500" />
        <path d="M666 735L685 746L704 735M685 746V768" fill="none" stroke="#e8f0f8" strokeWidth="1" />
        <path d="M685 768C706 768 714 735 706 716M650 738C665 725 690 720 708 735M666 785C650 770 648 745 660 730" fill="none" stroke="#dce8f4" strokeWidth="0.8" />
      </g>
      <text x="735" y="760" fontSize="44" fontWeight="700" fontFamily="Noto Sans CJK SC" fill="#6fc3ea" stroke="#f4f8fb" strokeWidth="3" paintOrder="stroke" textLength="200" lengthAdjust="spacingAndGlyphs">3D世界网</text>
      <text x="738" y="777" fontSize="13" fontWeight="700" fontFamily="Liberation Sans" fill="#6fc3ea" stroke="#f4f8fb" strokeWidth="2" paintOrder="stroke" textLength="194">WWW.3DSJW.COM</text>
    </svg>
  )
}

const strip1 = ['rect4', 'netdown', 'netyel', 'ytee', 'patch1', 'patch3', 'patch6', 'patchg', 'patchb', 'patchr', 'axes', 'curvetool', 'roof', 'blend', 'pipe']

export default function App() {
  return (
    <div className="flex h-[801px] w-[943px] flex-col overflow-hidden bg-[#d8d8d8]">
      <svg width="0" height="0" className="block h-0 w-0">
        <defs>
          <linearGradient id="gB" x1="0" y1="0" x2="0" y2="1">
            <stop offset="0" stopColor="#d0daff" />
            <stop offset="1" stopColor="#5068e8" />
          </linearGradient>
          <linearGradient id="gBh" x1="0" y1="0" x2="1" y2="0">
            <stop offset="0" stopColor="#5a70e0" />
            <stop offset="0.45" stopColor="#c8d4ff" />
            <stop offset="1" stopColor="#5068d8" />
          </linearGradient>
          <linearGradient id="gO" x1="0" y1="0" x2="0" y2="1">
            <stop offset="0" stopColor="#ffe08a" />
            <stop offset="1" stopColor="#ef7a10" />
          </linearGradient>
          <linearGradient id="gU" x1="0" y1="0" x2="1" y2="1">
            <stop offset="0" stopColor="#2a70c8" />
            <stop offset="1" stopColor="#7ab4f0" />
          </linearGradient>
          <linearGradient id="gTeal" x1="0" y1="0" x2="0" y2="1">
            <stop offset="0" stopColor="#d8f4f4" />
            <stop offset="1" stopColor="#3aa8b0" />
          </linearGradient>
          <linearGradient id="gSky" x1="0" y1="0" x2="1" y2="1">
            <stop offset="0" stopColor="#eaf4ff" />
            <stop offset="1" stopColor="#a8d4f8" />
          </linearGradient>
          <radialGradient id="gGlobe" cx="0.4" cy="0.35" r="0.8">
            <stop offset="0" stopColor="#8ad0f8" />
            <stop offset="0.55" stopColor="#1c64c8" />
            <stop offset="1" stopColor="#2a9a40" />
          </radialGradient>
        </defs>
      </svg>

      {/* title bar */}
      <div className="flex h-[31px] shrink-0 items-center border-t border-t-[#555] bg-[#1a1a1a] text-[#e8e8e8]">
        <Ic n="logo" className="ml-[3px] h-[25px] w-[25px]" />
        <span className="ml-[3px] whitespace-pre font-['Liberation_Mono',monospace] text-[15px]">NX 11.0.0.33 - </span>
        <span className={`text-[16px] tracking-[1.5px] ${cjk}`}>建模</span>
        <span className="whitespace-pre font-['Liberation_Mono',monospace] text-[15px]"> - [_model1.prt </span>
        <span className={`text-[16px] tracking-[1.5px] ${cjk}`}>（修改的）</span>
        <span className="whitespace-pre font-['Liberation_Mono',monospace] text-[15px]"> ]</span>
      </div>

      {/* menu bar */}
      <div className="flex h-[31px] shrink-0 items-center border-b border-b-[#c4c4c4] bg-[#e3e3e3]">
        <Grip />
        <svg viewBox="0 0 24 24" className="h-[22px] w-[22px] shrink-0">
          <path d="M3 17V7L8 4L11 6V13L14 11L21 14V19L12 23Z" fill="url(#gB)" stroke="#1c3ab0" strokeWidth="1.2" />
          <path d="M3 7L8 10V20M8 10L11 8M14 15L21 14M14 15V21" fill="none" stroke="#1c3ab0" />
        </svg>
        <div className="flex flex-1 pl-[9.5px]">
          {menus.map(([zh, key, w]) => (
            <div key={zh} className={`shrink-0 whitespace-nowrap text-[17px] leading-[20px] text-[#1b1b24] ${w} ${cjk}`}>
              {zh}
              <span className="font-['Liberation_Serif',serif] italic">
                (<span className="underline">{key}</span>)
              </span>
            </div>
          ))}
          <div className={`whitespace-nowrap text-[17.5px] leading-[20px] text-[#1b1b24] ${cjk}`}>
            <span className="font-['Liberation_Serif',serif] italic">GC</span>工具箱
          </div>
        </div>
      </div>

      {/* row 1 */}
      <Toolbar h="h-[37px]">
        <Grip />
        <div className="flex h-full w-[29px] shrink-0 items-center justify-center">
          <Ic n="logo" className="h-[26px] w-[26px]" />
        </div>
        <span className={`w-[38px] shrink-0 pl-[3px] text-[17px] text-[#1b1b24] ${cjk}`}>启动</span>
        <Tri className="w-[15px]" />
        <Slot n="page" />
        <Slot n="open" />
        <Slot n="user" />
        <Slot n="save" />
        <Sep className="w-[6px]" />
        <Slot n="cut" />
        <Slot n="copy" />
        <Slot n="paste" />
        <Slot n="del" />
        <Sep className="w-[6px]" />
        <Slot n="undo" />
        <Tri />
        <Slot n="redo" />
        <Sep className="w-[6px]" />
        <Slot n="refresh" />
        <Tri />
        <Sep className="w-[8px]" />
        <Slot n="orient" />
        <Slot n="windows" />
        <Slot n="difflist" />
        <Sep />
        <Slot n="info" />
        <Sep />
        <div className="ml-[5px] flex h-[29px] w-[220px] shrink-0 items-center justify-between border border-[#b0b0b0] bg-white pl-[6px] pr-[8px]">
          <span className={`text-[17.5px] text-[#a8a8a8] ${cjk}`}>查找命令</span>
          <svg viewBox="0 0 16 16" className="h-[16px] w-[16px]">
            <circle cx="10" cy="6" r="4" fill="#fff" stroke="#444" strokeWidth="1.3" />
            <path d="M7 9L2 14" stroke="#555" strokeWidth="2" />
          </svg>
        </div>
        <Slot n="pyramid" />
        <Slot n="mesh" />
        <Slot n="yellowcube" />
      </Toolbar>

      {/* row 2 */}
      <Toolbar h="h-[34px]">
        <Grip />
        <Slot n="cyl" />
        <Tri className="w-[15.5px]" />
        {['extrude', 'revolve', 'hole', 'boss', 'pad', 'thread'].map((n) => <Slot key={n} n={n} />)}
        <Sep className="w-[7px]" />
        {['raise', 'bumps', 'cubes', 'plane', 'csg'].map((n) => <Slot key={n} n={n} />)}
        <Tri />
        {['twin', 'redbox', 'sweep', 'slab', 'chamfer', 'band', 'redcage'].map((n) => <Slot key={n} n={n} />)}
        <Sep className="w-[7px]" />
        {['cutbox', 'topband', 'fold', 'fold2', 'fold3', 'funnel', 'node', 'slope', 'frustum', 'cylb'].map((n) => <Slot key={n} n={n} />)}
      </Toolbar>

      {/* row 3 */}
      <Toolbar h="h-[35px]">
        <Grip />
        <Slot n="line" />
        <Tri className="w-[16.5px]" />
        {['circline', 'line', 'arc', 'chain', 'spring', 'xyz', 'surf', 'poly'].map((n) => <Slot key={n} n={n} />)}
        <div className="flex h-full w-[31px] shrink-0 items-center justify-center font-['Liberation_Serif',serif] text-[25px] font-bold text-[#111]">A</div>
        {['heart', 'patch', 'dshape', 'curves', 'curves', 'diamond', 'diamond2', 'sectn', 'fillet', 'tube', 'cylarrow', 'plus'].map((n, i) => <Slot key={`${n}${i}`} n={n} />)}
        <Tri className="w-[18px]" />
        <Sep className="w-[3px]" />
        <Grip />
        <Slot n="fit" />
        <Tri />
        <Slot n="camera" />
        <Tri />
        <Slot n="cube" />
        <Tri />
        <Slot n="cube2" />
        <Slot n="cube3" />
      </Toolbar>

      {/* selection bar */}
      <div className="flex h-[36px] shrink-0 items-center overflow-hidden bg-[#d6d6d6] pl-[6px]">
        <Drop label="无选择过滤器" className="w-[233px]" />
        <Drop label="整个装配" className="ml-[9px] w-[246px]" />
        <Slot n="chains" />
        <Sep className="w-[3px]" />
        <div className="flex h-full w-[22px] shrink-0 items-center justify-center"><Ic n="bw1" className="h-[20px] w-[20px]" /></div>
        <div className="flex h-full w-[20px] shrink-0 items-center justify-center"><Ic n="bw2" className="h-[20px] w-[20px]" /></div>
        <Tri className="w-[20px]" />
        <div className="flex h-full w-[20px] shrink-0 items-center justify-center"><Ic n="bw3" className="h-[18px] w-[18px]" /></div>
        <Tri className="w-[16px]" />
        <div className="flex h-full w-[22px] shrink-0 items-center justify-center"><Ic n="bw4" className="h-[18px] w-[18px]" /></div>
        <Drop label="全部" className="ml-[4px] w-[90px]" />
        <div className="flex h-full w-[30px] shrink-0 items-center justify-center"><Ic n="grey" className="h-[18px] w-[18px]" /></div>
        <Sep className="w-[3px]" />
        <div className="flex h-full w-[22px] shrink-0 items-center justify-center"><Ic n="hex" className="h-[16px] w-[16px]" /></div>
        <div className="flex h-full w-[22px] shrink-0 items-center justify-center"><Ic n="dash" className="h-[18px] w-[18px]" /></div>
        <Tri className="w-[22px]" />
        <div className={`ml-[2px] flex h-[25px] w-[110px] shrink-0 items-center rounded-l-[3px] border border-[#9aa0a8] bg-white pl-[6px] text-[17.5px] text-[#111] ${cjk}`}>内侧</div>
      </div>

      <div className="flex min-h-0 flex-1">
        {/* left strip */}
        <div className="flex w-[51px] shrink-0 flex-col border-r border-r-[#bdbdbd] bg-gradient-to-b from-[#e6e6e6] to-[#d6d6d6]">
          <div className="h-[7.5px] shrink-0 px-[6px] pt-[4px]">
            <div className="border-t-2 border-dotted border-[#a8a8a8]" />
          </div>
          {strip1.map((n) => (
            <div key={n} className={`relative flex h-[31px] w-full shrink-0 items-center justify-center ${n === 'patch1' ? 'pr-[16px]' : ''}`}>
              <Ic n={n} />
              {n === 'patch1' && (
                <div className="absolute left-[38px] top-[13px] h-0 w-0 border-x-[3.5px] border-t-[4px] border-x-transparent border-t-[#111]" />
              )}
            </div>
          ))}
          <div className="mt-[25px] flex h-[19px] shrink-0 items-center justify-between px-[11px]">
            <div className="h-0 w-0 border-y-[4px] border-r-[5px] border-y-transparent border-r-[#111]" />
            <svg viewBox="0 0 8 10" className="h-[10px] w-[8px]">
              <path d="M1 1L4 4L7 1M1 5L4 8L7 5" fill="none" stroke="#111" strokeWidth="1.4" />
            </svg>
          </div>
          <div className="mt-[2px] h-[5px] border-t border-t-[#f4f4f4] shadow-[0_-1px_0_#b0b0b0]" />
          <div className="h-[10px] shrink-0 px-[6px]">
            <div className="border-t-2 border-dotted border-[#a8a8a8]" />
          </div>
          {['pins', 'pocket', 'yellowflag'].map((n) => (
            <div key={n} className="flex h-[31px] w-full shrink-0 items-center justify-center">
              <Ic n={n} />
            </div>
          ))}
        </div>
        {/* graphics window */}
        <div className="min-w-0 flex-1 bg-gradient-to-b from-[#b4b5b6] to-[#e8e9ea]">
          <Canvas />
        </div>
      </div>
    </div>
  )
}
